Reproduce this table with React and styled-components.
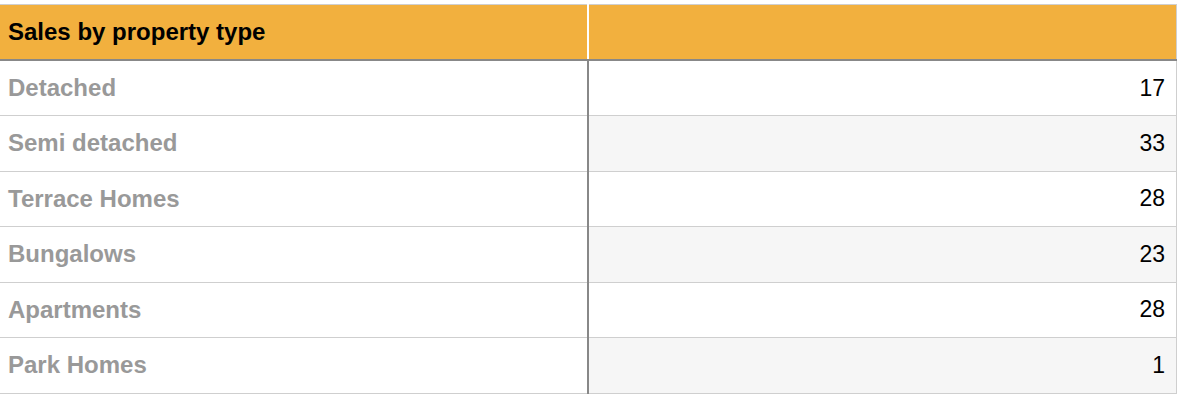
import React from "react";
import styled, { createGlobalStyle } from "styled-components";

const rows = [
  { name: "Detached", value: 17 },
  { name: "Semi detached", value: 33 },
  { name: "Terrace Homes", value: 28 },
  { name: "Bungalows", value: 23 },
  { name: "Apartments", value: 28 },
  { name: "Park Homes", value: 1 },
];

export default function App() {
  return (
    <>
      <Global />
      <Table>
        <thead>
          <tr>
            <HeadCell>Sales by property type</HeadCell>
            <HeadCell $last />
          </tr>
        </thead>
        <tbody>
          {rows.map((r, i) => (
            <Row key={r.name}>
              <NameCell>{r.name}</NameCell>
              <ValueCell $shaded={i % 2 === 1}>{r.value}</ValueCell>
            </Row>
          ))}
        </tbody>
      </Table>
    </>
  );
}

const Global = createGlobalStyle`
  body {
    margin: 0;
    background: #fff;
    font-family: "Liberation Sans", Arial, sans-serif;
  }
`;

const Table = styled.table`
  width: 1177px;
  margin-top: 4px;
  border-collapse: collapse;
  border-top: 1px solid #cfcfcf;
  border-right: 1px solid #cfcfcf;
  table-layout: fixed;
`;

const HeadCell = styled.th`
  height: 54px;
  padding: 0 8px;
  background: #f2b03e;
  color: #000;
  text-align: left;
  font-size: 24px;
  font-weight: 700;
  border-bottom: 2px solid #888;
  border-left: ${(p) => (p.$last ? "2px solid #fff" : "none")};
  width: ${(p) => (p.$last ? "auto" : "571px")};
`;

const Row = styled.tr`
  height: 55.5px;
  border-bottom: 1px solid #cfcfcf;
`;

const NameCell = styled.td`
  padding: 0 8px;
  color: #999;
  font-size: 24px;
  font-weight: 700;
`;

const ValueCell = styled.td`
  padding: 0 11px;
  text-align: right;
  color: #000;
  font-size: 23px;
  background: ${(p) => (p.$shaded ? "#f6f6f6" : "#fff")};
  border-left: 2px solid #888;
`;
